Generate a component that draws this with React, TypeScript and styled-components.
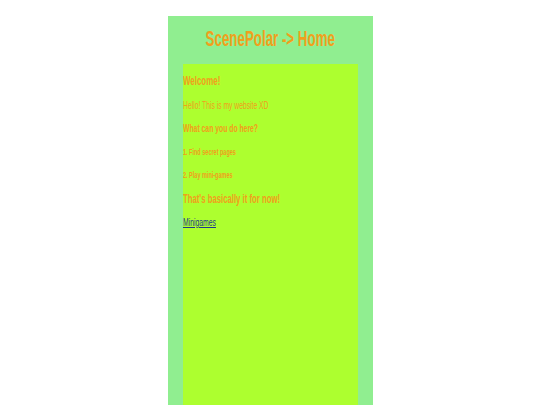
import styled, { createGlobalStyle, css } from "styled-components";

const GlobalStyle = createGlobalStyle`
  html, body {
    margin: 0;
    padding: 0;
    background: #ffffff;
    font-family: "Liberation Sans", Arial, sans-serif;
  }
`;

// the reference text is set in a squeezed sans
const squeezed = css`
  margin: 0;
  line-height: 14px;
  white-space: nowrap;
  transform: scaleX(0.62);
  transform-origin: left center;
`;

const Page = styled.div`
  width: 205px;
  min-height: calc(100vh - 16px);
  margin: 16px auto 0;
  padding: 12px 15px 0;
  box-sizing: border-box;
  background: #90ee90;
  display: flex;
  flex-direction: column;
  gap: 14px;
`;

const Title = styled.h1`
  align-self: center;
  margin: 0;
  line-height: 22px;
  font-size: 21.5px;
  font-weight: bold;
  color: #f0a01c;
  white-space: nowrap;
  transform: scaleX(0.62);
`;

const Content = styled.main`
  align-self: stretch;
  flex: 1;
  min-height: 360px;
  background: #adff2f;
  padding-top: 10px;
  display: flex;
  flex-direction: column;
  gap: 9.5px;
  color: #f0a01c;
`;

const Heading = styled.h2<{ $size: number }>`
  ${squeezed};
  font-size: ${(p) => p.$size}px;
  font-weight: bold;
`;

const Text = styled.p`
  ${squeezed};
  font-size: 10.9px;
`;

const Step = styled.h5`
  ${squeezed};
  font-size: 8.9px;
  font-weight: bold;
`;

const LinkRow = styled.p`
  ${squeezed};
  font-size: 11px;
`;

const GameLink = styled.a`
  color: #1f3a8c;
  text-decoration: underline;
`;

export default function App() {
  return (
    <>
      <GlobalStyle />
      <Page>
        <Title>ScenePolar -&gt; Home</Title>
        <Content>
          <Heading $size={12.8}>Welcome!</Heading>
          <Text>Hello! This is my website XD</Text>
          <Heading $size={11}>What can you do here?</Heading>
          <Step>1. Find secret pages</Step>
          <Step>2. Play mini-games</Step>
          <Heading $size={12.5}>That's basically it for now!</Heading>
          <LinkRow>
            <GameLink href="#minigames">Minigames</GameLink>
          </LinkRow>
        </Content>
      </Page>
    </>
  );
}
